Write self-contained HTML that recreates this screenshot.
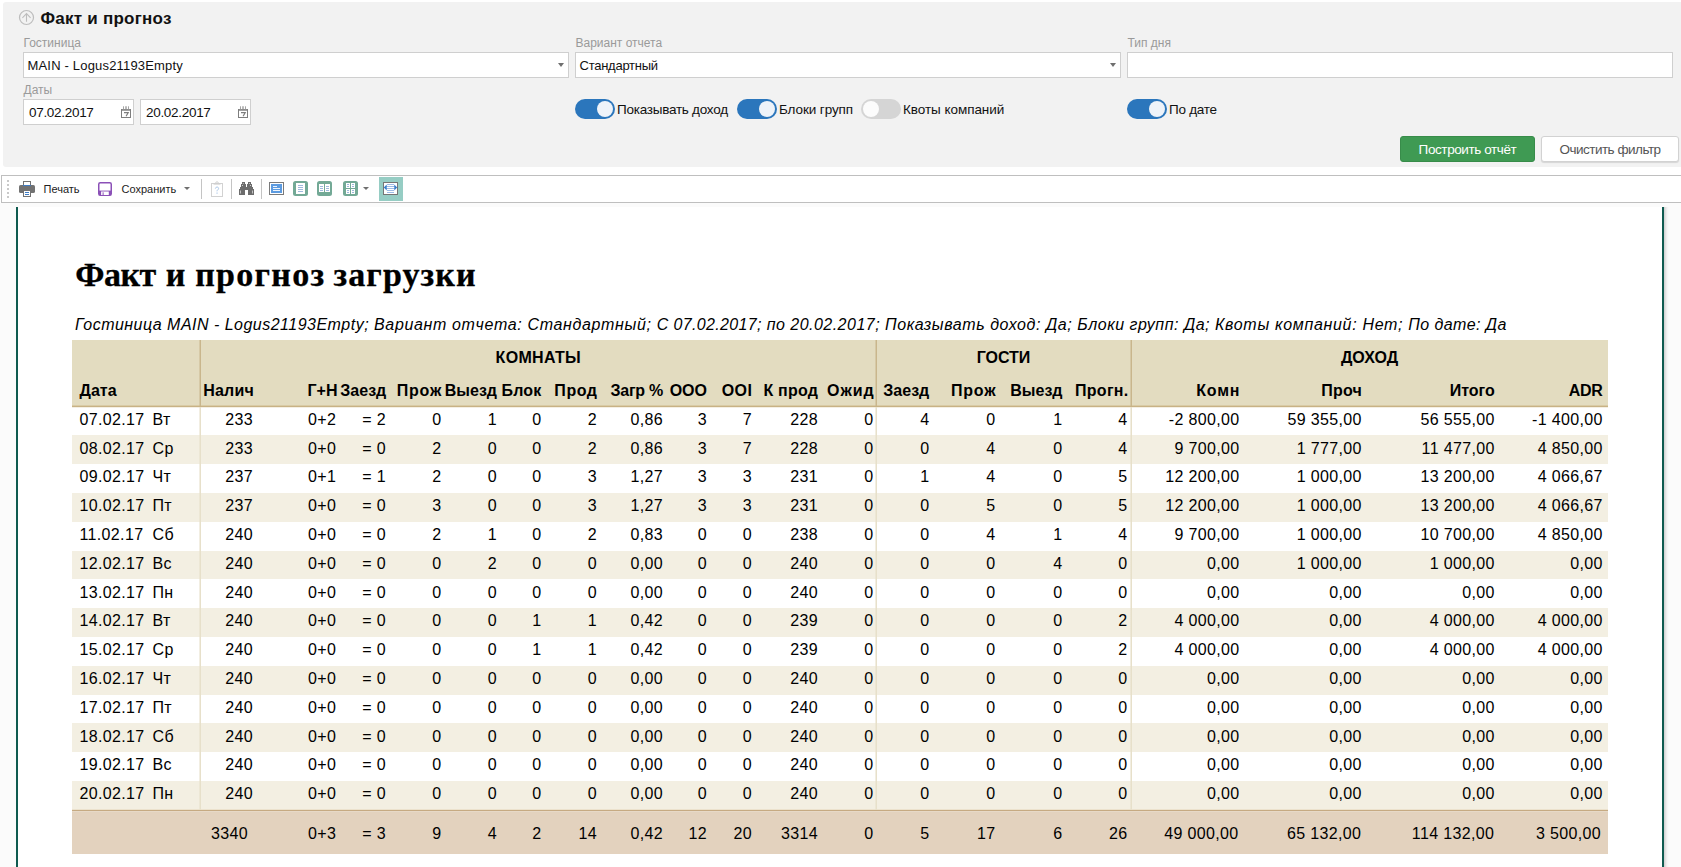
<!DOCTYPE html>
<html lang="ru">
<head>
<meta charset="utf-8">
<title>Факт и прогноз</title>
<style>
*{box-sizing:border-box;margin:0;padding:0}
html,body{width:1681px;height:867px;overflow:hidden;background:#fff}
body{font-family:"Liberation Sans",sans-serif;color:#000;position:relative}
.abs{position:absolute}
/* filter panel */
#panel{position:absolute;left:3px;top:2px;width:1678px;height:165px;background:#f2f2f2;border-radius:3px 0 0 3px}
#ptitle{position:absolute;left:40.5px;top:8px;font:bold 17px/22px "Liberation Sans",sans-serif;letter-spacing:.25px;color:#111;white-space:nowrap}
.lbl{position:absolute;font:12px/14px "Liberation Sans",sans-serif;color:#9a9a9a;white-space:nowrap}
.inp{position:absolute;height:26px;background:#fff;border:1px solid #cfcfcf;font:13px/25px "Liberation Sans",sans-serif;color:#111;white-space:nowrap;overflow:hidden}
.inp span{position:absolute;top:0}
.arr{position:absolute;width:0;height:0;border-left:3.5px solid transparent;border-right:3.5px solid transparent;border-top:4px solid #6f6f6f}
.tg{position:absolute;width:40px;height:20px;border-radius:10px;background:#2b76bc}
.tg i{position:absolute;top:2px;left:22px;width:16px;height:16px;border-radius:50%;background:#eef3f9}
.tg.off{background:#d5d5d5}
.tg.off i{left:2px;background:#fcfcfc}
.tl{position:absolute;font:13.5px/20px "Liberation Sans",sans-serif;letter-spacing:-.25px;color:#111;white-space:nowrap}
.btn{position:absolute;top:136px;height:26px;border-radius:3px;font:13.5px/26px "Liberation Sans",sans-serif;text-align:center;white-space:nowrap}
/* toolbar */
#tb{position:absolute;left:1px;top:175px;width:1690px;height:28px;background:#fff;border:1px solid #bfbfbf}
.tt{position:absolute;font:11px/14px "Liberation Sans",sans-serif;color:#222;white-space:nowrap}
.sep{position:absolute;top:179px;width:1px;height:20px;background:#c4c4c4}
/* viewer */
#view{position:absolute;left:0;top:203px;width:1681px;height:664px;background:#fbfbfb}
#page{position:absolute;left:16px;top:4px;width:1648px;height:660px;background:#fff;border-left:2px solid #0f5b50;border-right:2px solid #0f5b50}
#shadow{position:absolute;left:1664px;top:4px;width:5px;height:660px;background:linear-gradient(to right,#cfcfcf,#f3f3f3 60%,#fbfbfb)}
#h1{position:absolute;left:0;top:255px;height:40px;font:bold 34px/40px "Liberation Serif",serif;color:#000;white-space:nowrap;-webkit-text-stroke:.3px #000}
#h1 span{position:absolute;top:0}
#sub{position:absolute;left:75px;top:314px;width:1500px;height:22px;font:italic 16px/22px "Liberation Sans",sans-serif;color:#000;white-space:nowrap}
#sub span{position:absolute;top:0}
/* table */
#tbl{position:absolute;left:72px;top:340px;width:1536px;height:514px;font:16px/26.4px "Liberation Sans",sans-serif;letter-spacing:.35px;color:#000}
.hd{position:absolute;left:0;top:0;width:1536px;height:65px;background:#e3dcc0}
.hb{position:absolute;left:0;top:65px;width:1536px;height:3px;background:linear-gradient(to bottom,#d9cba5 0,#d9cba5 1px,#c8b285 1px,#c8b285 2px,rgba(235,226,204,.55) 2px,rgba(235,226,204,.55) 3px)}
.g{position:absolute;top:7px;text-align:center;font-weight:bold;letter-spacing:0;line-height:22px}
.c{position:absolute;top:0;white-space:nowrap}
.c.h{top:40px;font-weight:bold;letter-spacing:0;line-height:22px}
.rw{position:absolute;left:0;width:1536px;height:28.8px}
.rw.alt{background:#f3efe2}
.rt{position:absolute;left:0;width:1536px;height:26px;line-height:26px}
.tot{position:absolute;left:0;top:469px;width:1536px;height:45px;background:#e3d2be;line-height:50px}
.tb2{position:absolute;left:0;top:469px;width:1536px;height:3px;background:linear-gradient(to bottom,#ece2cd 0,#ece2cd 1px,#c6aa82 1px,#c6aa82 2px,#e7d9c7 2px,#e7d9c7 3px)}
.vl{position:absolute;top:67px;width:2px;height:403px;margin-left:-1px;background:linear-gradient(to right,rgba(231,224,202,.55) 0,rgba(231,224,202,.55) 1px,#e7e0ca 1px,#e7e0ca 2px)}
.vh{position:absolute;top:0;width:2px;height:66px;margin-left:-1px;background:linear-gradient(to right,rgba(201,182,140,.5) 0,rgba(201,182,140,.5) 1px,#c9b68c 1px,#c9b68c 2px)}
</style>
</head>
<body>
<div id="panel"></div>
<svg class="abs" style="left:18px;top:9px" width="17" height="17" viewBox="0 0 17 17"><circle cx="8.5" cy="8.5" r="7" fill="none" stroke="#bdbdbd" stroke-width="1.2"/><path d="M8.5 12.700V4.600M4.400 8.800L8.500 4.600L12.600 8.800" fill="none" stroke="#bdbdbd" stroke-width="1.100"/></svg>
<div id="ptitle">Факт и прогноз</div>

<div class="lbl" style="left:23.5px;top:36px">Гостиница</div>
<div class="inp" style="left:23px;top:52px;width:546px"><span style="left:3.5px;letter-spacing:.18px">MAIN - Logus21193Empty</span></div>
<div class="arr" style="left:557.5px;top:63px"></div>
<div class="lbl" style="left:575.5px;top:36px">Вариант отчета</div>
<div class="inp" style="left:575px;top:52px;width:546px"><span style="left:3.5px;letter-spacing:-.25px">Стандартный</span></div>
<div class="arr" style="left:1109.5px;top:63px"></div>
<div class="lbl" style="left:1127.5px;top:36px">Тип дня</div>
<div class="inp" style="left:1127px;top:52px;width:546px"></div>

<div class="lbl" style="left:23.5px;top:83px">Даты</div>
<div class="inp" style="left:23px;top:99px;width:111px"><span style="left:5px;font-size:13.5px;letter-spacing:-.3px">07.02.2017</span></div>
<div class="inp" style="left:140px;top:99px;width:111px"><span style="left:5px;font-size:13.5px;letter-spacing:-.3px">20.02.2017</span></div>
<svg class="abs" style="left:121px;top:106px" width="10" height="12" viewBox="0 0 10 12"><rect x=".5" y="3.500" width="9" height="8" fill="#fff" stroke="#7e7e7e"/><rect x="1" y="3" width="8" height="1.800" fill="#8c8c8c"/><path d="M2.500 .3v3M7.500 .3v3" stroke="#a5a5a5" stroke-width="1"/><path d="M5 .3v3" stroke="#8a8a8a" stroke-width="1.200"/><path d="M3 6.600h4.200l-2.100 3.700" fill="none" stroke="#7e7e7e" stroke-width="1.200"/></svg>
<svg class="abs" style="left:238px;top:106px" width="10" height="12" viewBox="0 0 10 12"><rect x=".5" y="3.500" width="9" height="8" fill="#fff" stroke="#7e7e7e"/><rect x="1" y="3" width="8" height="1.800" fill="#8c8c8c"/><path d="M2.500 .3v3M7.500 .3v3" stroke="#a5a5a5" stroke-width="1"/><path d="M5 .3v3" stroke="#8a8a8a" stroke-width="1.200"/><path d="M3 6.600h4.200l-2.100 3.700" fill="none" stroke="#7e7e7e" stroke-width="1.200"/></svg>

<div class="tg" style="left:575px;top:99px"><i></i></div><div class="tl" style="left:617px;top:100px">Показывать доход</div>
<div class="tg" style="left:737px;top:99px"><i></i></div><div class="tl" style="left:779px;top:100px;letter-spacing:-.1px">Блоки групп</div>
<div class="tg off" style="left:861px;top:99px"><i></i></div><div class="tl" style="left:903px;top:100px;letter-spacing:-.05px">Квоты компаний</div>
<div class="tg" style="left:1127px;top:99px"><i></i></div><div class="tl" style="left:1169px;top:100px">По дате</div>

<div class="btn" style="left:1400px;width:135px;background:#3f9a53;border:1px solid #388c4a;color:#fff;letter-spacing:-.4px">Построить отчёт</div>
<div class="btn" style="left:1541px;width:138px;background:#fff;border:1px solid #d2d2d2;color:#555;letter-spacing:-.5px;box-shadow:0 1px 1px rgba(0,0,0,.12)">Очистить фильтр</div>

<!-- toolbar -->
<div id="tb"></div>
<div class="abs" style="left:7px;top:180px;width:2px;height:19px;background:repeating-linear-gradient(to bottom,#c9c9c9 0,#c9c9c9 2px,transparent 2px,transparent 4px)"></div>
<!--ICONS--><!-- printer -->
<svg class="abs" style="left:19px;top:181px" width="16" height="16" viewBox="0 0 16 16"><rect x="0" y="4" width="16" height="8" rx="1.6" fill="#727272"/><rect x="4.5" y=".5" width="7" height="4.5" fill="#fff" stroke="#727272"/><rect x="4" y="4" width="8" height="1" fill="#3f7cc4"/><rect x="4.5" y="9.5" width="7" height="6" fill="#fff" stroke="#727272"/><path d="M6 11.5h4M6 13.5h4" stroke="#3f7cc4" stroke-width="1" fill="none"/></svg>
<!-- save -->
<svg class="abs" style="left:98px;top:182px" width="14" height="14" viewBox="0 0 14 14"><rect x=".75" y=".75" width="12.5" height="12.5" rx="1.5" fill="#fff" stroke="#8b50b7" stroke-width="1.5"/><rect x="1" y="8.6" width="12" height="4.6" fill="#8b50b7"/><rect x="3.1" y="9.5" width="7.7" height="3.5" fill="#fff"/><rect x="4.6" y="10.3" width="1" height="2.7" fill="#8b50b7"/></svg>
<!-- clipboard (disabled) -->
<svg class="abs" style="left:211px;top:181px" width="12" height="16" viewBox="0 0 12 16"><rect x=".5" y="2.5" width="11" height="13" fill="#fff" stroke="#d2d2d2"/><path d="M4.6 2.2a1.4 1.4 0 0 1 2.8 0" fill="none" stroke="#d2d2d2"/><rect x="2.5" y="2" width="7" height="1.6" fill="#cfcfcf"/><path d="M4.4 7.6c0-2 3.2-2 3.2-.2 0 1.400-1.600 1.400-1.600 2.900" fill="none" stroke="#a9c6e8" stroke-width="1"/><rect x="5.4" y="11.600" width="1.300" height="1" fill="#a9c6e8"/></svg>
<!-- binoculars -->
<svg class="abs" style="left:239px;top:182px" width="15" height="13" viewBox="0 0 15 13"><path d="M3 0h3v2h1v3h1V2h1V0h3v2h1v3h1v2h1v6H9V8H6v5H0V7h1V5h1V2h1z" fill="#6c6c6c"/><path d="M1.500 8.500v3M13.500 8.500v3" stroke="#d8d8d8" stroke-width=".8"/><rect x="3.800" y="1" width="1" height="1" fill="#bbb"/><rect x="10" y="1" width="1" height="1" fill="#bbb"/><rect x="3" y="3" width="1" height="1" fill="#ccc"/><rect x="11" y="3" width="1" height="1" fill="#ccc"/></svg>
<!-- page blue -->
<svg class="abs" style="left:269px;top:182px" width="15" height="13" viewBox="0 0 15 13"><rect x=".5" y=".5" width="14" height="12" fill="#fff" stroke="#7a7a7a"/><rect x="2" y="2" width="11" height="9" fill="#5c9be0"/><path d="M4 4.500h4M4 6.500h7M4 8.500h7" stroke="#eef4fc" stroke-width="1"/></svg>
<!-- single page green -->
<svg class="abs" style="left:293px;top:181px" width="15" height="15" viewBox="0 0 15 15"><rect width="15" height="15" rx="2.5" fill="#73a996"/><rect x="3" y="2" width="9" height="11" fill="#fff"/><path d="M5 4.500h5M5 6.500h5M5 8.500h5M5 10.500h5" stroke="#9fb8dc" stroke-width="1"/></svg>
<!-- two pages green -->
<svg class="abs" style="left:317px;top:181px" width="15" height="15" viewBox="0 0 15 15"><rect width="15" height="15" rx="2.5" fill="#73a996"/><rect x="2" y="3" width="5" height="8" fill="#fff"/><rect x="8" y="3" width="5" height="8" fill="#fff"/><path d="M3 5.500h3M3 7.500h3M3 9.500h3M9 5.500h3M9 7.500h3M9 9.500h3" stroke="#9fb8dc" stroke-width="1"/></svg>
<!-- four pages green -->
<svg class="abs" style="left:343px;top:181px" width="15" height="15" viewBox="0 0 15 15"><rect width="15" height="15" rx="2.5" fill="#73a996"/><rect x="3" y="2" width="4" height="5" fill="#fff"/><rect x="8" y="2" width="4" height="5" fill="#fff"/><rect x="3" y="8" width="4" height="5" fill="#fff"/><rect x="8" y="8" width="4" height="5" fill="#fff"/><path d="M4 3.500h2M4 5.500h2M9 3.500h2M9 5.500h2M4 9.500h2M4 11.500h2M9 9.500h2M9 11.500h2" stroke="#9fb8dc" stroke-width="1"/></svg>
<!-- fit width (active) -->
<div class="abs" style="left:379px;top:177px;width:24px;height:24px;background:#96cdc4"></div>
<svg class="abs" style="left:383px;top:182px" width="15" height="13" viewBox="0 0 15 13"><rect x=".5" y=".5" width="14" height="12" fill="#fff" stroke="#757575"/><path d="M4 2.500h7M3 4.500h9M3 6.500h9M4 8.500h7M4 10.500h7" stroke="#9cbbe6" stroke-width="1"/><path d="M.8 5.500l2.900-2.900v5.800zM14.200 5.500l-2.900-2.900v5.800z" fill="#3a7fcb"/></svg>
<!--/ICONS-->
<div class="tt" style="left:43.5px;top:182px">Печать</div>
<div class="tt" style="left:121.5px;top:182px">Сохранить</div>
<div class="arr" style="left:184px;top:187px;border-left-width:3px;border-right-width:3px;border-top-width:3.5px"></div>
<div class="sep" style="left:201px"></div>
<div class="sep" style="left:231px"></div>
<div class="sep" style="left:261px"></div>
<div class="arr" style="left:363px;top:187px;border-left-width:3px;border-right-width:3px;border-top-width:3.5px"></div>

<!-- viewer -->
<div id="view"><div id="page"></div><div id="shadow"></div></div>
<div id="h1"><span style="left:75.300px;letter-spacing:-.55px">Факт</span><span style="left:165.800px">и</span><span style="left:195.200px;letter-spacing:1.300px">прогноз</span><span style="left:333.500px;letter-spacing:1.100px">загрузки</span></div>
<div id="sub"><span style="left:0px;letter-spacing:0.481px">Гостиница MAIN - Logus21193Empty;</span><span style="left:299px;letter-spacing:0.653px">Вариант отчета: Стандартный;</span><span style="left:581.7px;letter-spacing:0.359px">С 07.02.2017;</span><span style="left:691.7px;letter-spacing:0.478px">по 20.02.2017;</span><span style="left:810px;letter-spacing:0.568px">Показывать доход: Да;</span><span style="left:1002.3px;letter-spacing:0.509px">Блоки групп: Да;</span><span style="left:1140px;letter-spacing:0.682px">Квоты компаний: Нет;</span><span style="left:1333.3px;letter-spacing:0.403px">По дате: Да</span></div>
<div id="tbl">
<div class="hd">
<span class="g" style="left:128.3px;width:676px;letter-spacing:.3px">КОМНАТЫ</span>
<span class="g" style="left:804px;width:255px">ГОСТИ</span>
<span class="g" style="left:1059px;width:477px">ДОХОД</span>
<span class="c h" style="left:7.5px">Дата</span>
<span class="c h" style="letter-spacing:0.2px;left:131.25px">Налич</span>
<span class="c h" style="left:235.5px">Г+Н</span>
<span class="c h r" style="right:1221.75px">Заезд</span>
<span class="c h r" style="letter-spacing:0.8px;right:1165.95px">Прож</span>
<span class="c h r" style="right:1111px">Выезд</span>
<span class="c h r" style="letter-spacing:0.15px;right:1066.6px">Блок</span>
<span class="c h r" style="letter-spacing:0.55px;right:1010.45px">Прод</span>
<span class="c h r" style="letter-spacing:-0.25px;right:945px">Загр %</span>
<span class="c h r" style="right:901px">ООО</span>
<span class="c h r" style="letter-spacing:0.5px;right:855.5px">ООI</span>
<span class="c h r" style="letter-spacing:0.25px;right:789.75px">К прод</span>
<span class="c h r" style="letter-spacing:1px;right:733.25px">Ожид</span>
<span class="c h r" style="right:678.75px">Заезд</span>
<span class="c h r" style="letter-spacing:0.8px;right:611.7px">Прож</span>
<span class="c h r" style="right:545.5px">Выезд</span>
<span class="c h r" style="letter-spacing:0.3px;right:479.45px">Прогн.</span>
<span class="c h r" style="letter-spacing:0.8px;right:367.7px">Комн</span>
<span class="c h r" style="letter-spacing:0.2px;right:246.05px">Проч</span>
<span class="c h r" style="right:113.25px">Итого</span>
<span class="c h r" style="letter-spacing:-0.3px;right:5.55px">ADR</span>
</div>
<div class="rw" style="top:66.65px"></div><div class="rt" style="top:67px"><span class="c" style="left:7.5px">07.02.17</span><span class="c" style="left:80.5px">Вт</span><span class="c r" style="right:1355px">233</span><span class="c" style="left:236px">0+2</span><span class="c r" style="right:1222px">= 2</span><span class="c r" style="right:1166.5px">0</span><span class="c r" style="right:1111px">1</span><span class="c r" style="right:1066.5px">0</span><span class="c r" style="right:1011px">2</span><span class="c r" style="right:945px">0,86</span><span class="c r" style="right:901px">3</span><span class="c r" style="right:856px">7</span><span class="c r" style="right:790px">228</span><span class="c r" style="right:734.5px">0</span><span class="c r" style="right:678.5px">4</span><span class="c r" style="right:612.5px">0</span><span class="c r" style="right:545.5px">1</span><span class="c r" style="right:480.5px">4</span><span class="c r" style="right:368.5px">-2 800,00</span><span class="c r" style="right:246.25px">59 355,00</span><span class="c r" style="right:113.25px">56 555,00</span><span class="c r" style="right:5.25px">-1 400,00</span></div>
<div class="rw alt" style="top:95.45px"></div><div class="rt" style="top:96px"><span class="c" style="left:7.5px">08.02.17</span><span class="c" style="left:80.5px">Ср</span><span class="c r" style="right:1355px">233</span><span class="c" style="left:236px">0+0</span><span class="c r" style="right:1222px">= 0</span><span class="c r" style="right:1166.5px">2</span><span class="c r" style="right:1111px">0</span><span class="c r" style="right:1066.5px">0</span><span class="c r" style="right:1011px">2</span><span class="c r" style="right:945px">0,86</span><span class="c r" style="right:901px">3</span><span class="c r" style="right:856px">7</span><span class="c r" style="right:790px">228</span><span class="c r" style="right:734.5px">0</span><span class="c r" style="right:678.5px">0</span><span class="c r" style="right:612.5px">4</span><span class="c r" style="right:545.5px">0</span><span class="c r" style="right:480.5px">4</span><span class="c r" style="right:368.5px">9 700,00</span><span class="c r" style="right:246.25px">1 777,00</span><span class="c r" style="right:113.25px">11 477,00</span><span class="c r" style="right:5.25px">4 850,00</span></div>
<div class="rw" style="top:124.25px"></div><div class="rt" style="top:124px"><span class="c" style="left:7.5px">09.02.17</span><span class="c" style="left:80.5px">Чт</span><span class="c r" style="right:1355px">237</span><span class="c" style="left:236px">0+1</span><span class="c r" style="right:1222px">= 1</span><span class="c r" style="right:1166.5px">2</span><span class="c r" style="right:1111px">0</span><span class="c r" style="right:1066.5px">0</span><span class="c r" style="right:1011px">3</span><span class="c r" style="right:945px">1,27</span><span class="c r" style="right:901px">3</span><span class="c r" style="right:856px">3</span><span class="c r" style="right:790px">231</span><span class="c r" style="right:734.5px">0</span><span class="c r" style="right:678.5px">1</span><span class="c r" style="right:612.5px">4</span><span class="c r" style="right:545.5px">0</span><span class="c r" style="right:480.5px">5</span><span class="c r" style="right:368.5px">12 200,00</span><span class="c r" style="right:246.25px">1 000,00</span><span class="c r" style="right:113.25px">13 200,00</span><span class="c r" style="right:5.25px">4 066,67</span></div>
<div class="rw alt" style="top:153.05px"></div><div class="rt" style="top:153px"><span class="c" style="left:7.5px">10.02.17</span><span class="c" style="left:80.5px">Пт</span><span class="c r" style="right:1355px">237</span><span class="c" style="left:236px">0+0</span><span class="c r" style="right:1222px">= 0</span><span class="c r" style="right:1166.5px">3</span><span class="c r" style="right:1111px">0</span><span class="c r" style="right:1066.5px">0</span><span class="c r" style="right:1011px">3</span><span class="c r" style="right:945px">1,27</span><span class="c r" style="right:901px">3</span><span class="c r" style="right:856px">3</span><span class="c r" style="right:790px">231</span><span class="c r" style="right:734.5px">0</span><span class="c r" style="right:678.5px">0</span><span class="c r" style="right:612.5px">5</span><span class="c r" style="right:545.5px">0</span><span class="c r" style="right:480.5px">5</span><span class="c r" style="right:368.5px">12 200,00</span><span class="c r" style="right:246.25px">1 000,00</span><span class="c r" style="right:113.25px">13 200,00</span><span class="c r" style="right:5.25px">4 066,67</span></div>
<div class="rw" style="top:181.85px"></div><div class="rt" style="top:182px"><span class="c" style="left:7.5px">11.02.17</span><span class="c" style="left:80.5px">Сб</span><span class="c r" style="right:1355px">240</span><span class="c" style="left:236px">0+0</span><span class="c r" style="right:1222px">= 0</span><span class="c r" style="right:1166.5px">2</span><span class="c r" style="right:1111px">1</span><span class="c r" style="right:1066.5px">0</span><span class="c r" style="right:1011px">2</span><span class="c r" style="right:945px">0,83</span><span class="c r" style="right:901px">0</span><span class="c r" style="right:856px">0</span><span class="c r" style="right:790px">238</span><span class="c r" style="right:734.5px">0</span><span class="c r" style="right:678.5px">0</span><span class="c r" style="right:612.5px">4</span><span class="c r" style="right:545.5px">1</span><span class="c r" style="right:480.5px">4</span><span class="c r" style="right:368.5px">9 700,00</span><span class="c r" style="right:246.25px">1 000,00</span><span class="c r" style="right:113.25px">10 700,00</span><span class="c r" style="right:5.25px">4 850,00</span></div>
<div class="rw alt" style="top:210.65px"></div><div class="rt" style="top:211px"><span class="c" style="left:7.5px">12.02.17</span><span class="c" style="left:80.5px">Вс</span><span class="c r" style="right:1355px">240</span><span class="c" style="left:236px">0+0</span><span class="c r" style="right:1222px">= 0</span><span class="c r" style="right:1166.5px">0</span><span class="c r" style="right:1111px">2</span><span class="c r" style="right:1066.5px">0</span><span class="c r" style="right:1011px">0</span><span class="c r" style="right:945px">0,00</span><span class="c r" style="right:901px">0</span><span class="c r" style="right:856px">0</span><span class="c r" style="right:790px">240</span><span class="c r" style="right:734.5px">0</span><span class="c r" style="right:678.5px">0</span><span class="c r" style="right:612.5px">0</span><span class="c r" style="right:545.5px">4</span><span class="c r" style="right:480.5px">0</span><span class="c r" style="right:368.5px">0,00</span><span class="c r" style="right:246.25px">1 000,00</span><span class="c r" style="right:113.25px">1 000,00</span><span class="c r" style="right:5.25px">0,00</span></div>
<div class="rw" style="top:239.45px"></div><div class="rt" style="top:240px"><span class="c" style="left:7.5px">13.02.17</span><span class="c" style="left:80.5px">Пн</span><span class="c r" style="right:1355px">240</span><span class="c" style="left:236px">0+0</span><span class="c r" style="right:1222px">= 0</span><span class="c r" style="right:1166.5px">0</span><span class="c r" style="right:1111px">0</span><span class="c r" style="right:1066.5px">0</span><span class="c r" style="right:1011px">0</span><span class="c r" style="right:945px">0,00</span><span class="c r" style="right:901px">0</span><span class="c r" style="right:856px">0</span><span class="c r" style="right:790px">240</span><span class="c r" style="right:734.5px">0</span><span class="c r" style="right:678.5px">0</span><span class="c r" style="right:612.5px">0</span><span class="c r" style="right:545.5px">0</span><span class="c r" style="right:480.5px">0</span><span class="c r" style="right:368.5px">0,00</span><span class="c r" style="right:246.25px">0,00</span><span class="c r" style="right:113.25px">0,00</span><span class="c r" style="right:5.25px">0,00</span></div>
<div class="rw alt" style="top:268.25px"></div><div class="rt" style="top:268px"><span class="c" style="left:7.5px">14.02.17</span><span class="c" style="left:80.5px">Вт</span><span class="c r" style="right:1355px">240</span><span class="c" style="left:236px">0+0</span><span class="c r" style="right:1222px">= 0</span><span class="c r" style="right:1166.5px">0</span><span class="c r" style="right:1111px">0</span><span class="c r" style="right:1066.5px">1</span><span class="c r" style="right:1011px">1</span><span class="c r" style="right:945px">0,42</span><span class="c r" style="right:901px">0</span><span class="c r" style="right:856px">0</span><span class="c r" style="right:790px">239</span><span class="c r" style="right:734.5px">0</span><span class="c r" style="right:678.5px">0</span><span class="c r" style="right:612.5px">0</span><span class="c r" style="right:545.5px">0</span><span class="c r" style="right:480.5px">2</span><span class="c r" style="right:368.5px">4 000,00</span><span class="c r" style="right:246.25px">0,00</span><span class="c r" style="right:113.25px">4 000,00</span><span class="c r" style="right:5.25px">4 000,00</span></div>
<div class="rw" style="top:297.05px"></div><div class="rt" style="top:297px"><span class="c" style="left:7.5px">15.02.17</span><span class="c" style="left:80.5px">Ср</span><span class="c r" style="right:1355px">240</span><span class="c" style="left:236px">0+0</span><span class="c r" style="right:1222px">= 0</span><span class="c r" style="right:1166.5px">0</span><span class="c r" style="right:1111px">0</span><span class="c r" style="right:1066.5px">1</span><span class="c r" style="right:1011px">1</span><span class="c r" style="right:945px">0,42</span><span class="c r" style="right:901px">0</span><span class="c r" style="right:856px">0</span><span class="c r" style="right:790px">239</span><span class="c r" style="right:734.5px">0</span><span class="c r" style="right:678.5px">0</span><span class="c r" style="right:612.5px">0</span><span class="c r" style="right:545.5px">0</span><span class="c r" style="right:480.5px">2</span><span class="c r" style="right:368.5px">4 000,00</span><span class="c r" style="right:246.25px">0,00</span><span class="c r" style="right:113.25px">4 000,00</span><span class="c r" style="right:5.25px">4 000,00</span></div>
<div class="rw alt" style="top:325.85px"></div><div class="rt" style="top:326px"><span class="c" style="left:7.5px">16.02.17</span><span class="c" style="left:80.5px">Чт</span><span class="c r" style="right:1355px">240</span><span class="c" style="left:236px">0+0</span><span class="c r" style="right:1222px">= 0</span><span class="c r" style="right:1166.5px">0</span><span class="c r" style="right:1111px">0</span><span class="c r" style="right:1066.5px">0</span><span class="c r" style="right:1011px">0</span><span class="c r" style="right:945px">0,00</span><span class="c r" style="right:901px">0</span><span class="c r" style="right:856px">0</span><span class="c r" style="right:790px">240</span><span class="c r" style="right:734.5px">0</span><span class="c r" style="right:678.5px">0</span><span class="c r" style="right:612.5px">0</span><span class="c r" style="right:545.5px">0</span><span class="c r" style="right:480.5px">0</span><span class="c r" style="right:368.5px">0,00</span><span class="c r" style="right:246.25px">0,00</span><span class="c r" style="right:113.25px">0,00</span><span class="c r" style="right:5.25px">0,00</span></div>
<div class="rw" style="top:354.65px"></div><div class="rt" style="top:355px"><span class="c" style="left:7.5px">17.02.17</span><span class="c" style="left:80.5px">Пт</span><span class="c r" style="right:1355px">240</span><span class="c" style="left:236px">0+0</span><span class="c r" style="right:1222px">= 0</span><span class="c r" style="right:1166.5px">0</span><span class="c r" style="right:1111px">0</span><span class="c r" style="right:1066.5px">0</span><span class="c r" style="right:1011px">0</span><span class="c r" style="right:945px">0,00</span><span class="c r" style="right:901px">0</span><span class="c r" style="right:856px">0</span><span class="c r" style="right:790px">240</span><span class="c r" style="right:734.5px">0</span><span class="c r" style="right:678.5px">0</span><span class="c r" style="right:612.5px">0</span><span class="c r" style="right:545.5px">0</span><span class="c r" style="right:480.5px">0</span><span class="c r" style="right:368.5px">0,00</span><span class="c r" style="right:246.25px">0,00</span><span class="c r" style="right:113.25px">0,00</span><span class="c r" style="right:5.25px">0,00</span></div>
<div class="rw alt" style="top:383.45px"></div><div class="rt" style="top:384px"><span class="c" style="left:7.5px">18.02.17</span><span class="c" style="left:80.5px">Сб</span><span class="c r" style="right:1355px">240</span><span class="c" style="left:236px">0+0</span><span class="c r" style="right:1222px">= 0</span><span class="c r" style="right:1166.5px">0</span><span class="c r" style="right:1111px">0</span><span class="c r" style="right:1066.5px">0</span><span class="c r" style="right:1011px">0</span><span class="c r" style="right:945px">0,00</span><span class="c r" style="right:901px">0</span><span class="c r" style="right:856px">0</span><span class="c r" style="right:790px">240</span><span class="c r" style="right:734.5px">0</span><span class="c r" style="right:678.5px">0</span><span class="c r" style="right:612.5px">0</span><span class="c r" style="right:545.5px">0</span><span class="c r" style="right:480.5px">0</span><span class="c r" style="right:368.5px">0,00</span><span class="c r" style="right:246.25px">0,00</span><span class="c r" style="right:113.25px">0,00</span><span class="c r" style="right:5.25px">0,00</span></div>
<div class="rw" style="top:412.25px"></div><div class="rt" style="top:412px"><span class="c" style="left:7.5px">19.02.17</span><span class="c" style="left:80.5px">Вс</span><span class="c r" style="right:1355px">240</span><span class="c" style="left:236px">0+0</span><span class="c r" style="right:1222px">= 0</span><span class="c r" style="right:1166.5px">0</span><span class="c r" style="right:1111px">0</span><span class="c r" style="right:1066.5px">0</span><span class="c r" style="right:1011px">0</span><span class="c r" style="right:945px">0,00</span><span class="c r" style="right:901px">0</span><span class="c r" style="right:856px">0</span><span class="c r" style="right:790px">240</span><span class="c r" style="right:734.5px">0</span><span class="c r" style="right:678.5px">0</span><span class="c r" style="right:612.5px">0</span><span class="c r" style="right:545.5px">0</span><span class="c r" style="right:480.5px">0</span><span class="c r" style="right:368.5px">0,00</span><span class="c r" style="right:246.25px">0,00</span><span class="c r" style="right:113.25px">0,00</span><span class="c r" style="right:5.25px">0,00</span></div>
<div class="rw alt" style="top:441.05px"></div><div class="rt" style="top:441px"><span class="c" style="left:7.5px">20.02.17</span><span class="c" style="left:80.5px">Пн</span><span class="c r" style="right:1355px">240</span><span class="c" style="left:236px">0+0</span><span class="c r" style="right:1222px">= 0</span><span class="c r" style="right:1166.5px">0</span><span class="c r" style="right:1111px">0</span><span class="c r" style="right:1066.5px">0</span><span class="c r" style="right:1011px">0</span><span class="c r" style="right:945px">0,00</span><span class="c r" style="right:901px">0</span><span class="c r" style="right:856px">0</span><span class="c r" style="right:790px">240</span><span class="c r" style="right:734.5px">0</span><span class="c r" style="right:678.5px">0</span><span class="c r" style="right:612.5px">0</span><span class="c r" style="right:545.5px">0</span><span class="c r" style="right:480.5px">0</span><span class="c r" style="right:368.5px">0,00</span><span class="c r" style="right:246.25px">0,00</span><span class="c r" style="right:113.25px">0,00</span><span class="c r" style="right:5.25px">0,00</span></div>
<div class="tot"><span class="c r" style="right:1360px">3340</span><span class="c" style="left:236px">0+3</span><span class="c r" style="right:1222px">= 3</span><span class="c r" style="right:1166.5px">9</span><span class="c r" style="right:1111px">4</span><span class="c r" style="right:1066.5px">2</span><span class="c r" style="right:1011px">14</span><span class="c r" style="right:945px">0,42</span><span class="c r" style="right:901px">12</span><span class="c r" style="right:856px">20</span><span class="c r" style="right:790px">3314</span><span class="c r" style="right:734.5px">0</span><span class="c r" style="right:678.5px">5</span><span class="c r" style="right:612.5px">17</span><span class="c r" style="right:545.5px">6</span><span class="c r" style="right:480.5px">26</span><span class="c r" style="right:369.5px">49 000,00</span><span class="c r" style="right:246.75px">65 132,00</span><span class="c r" style="right:113.75px">114 132,00</span><span class="c r" style="right:7px">3 500,00</span></div><div class="tb2"></div><div class="hb"></div>
<i class="vl" style="left:128px"></i><i class="vh" style="left:128px"></i>
<i class="vl" style="left:804px"></i><i class="vh" style="left:804px"></i>
<i class="vl" style="left:1059px"></i><i class="vh" style="left:1059px"></i>
</div>
</body>
</html>
